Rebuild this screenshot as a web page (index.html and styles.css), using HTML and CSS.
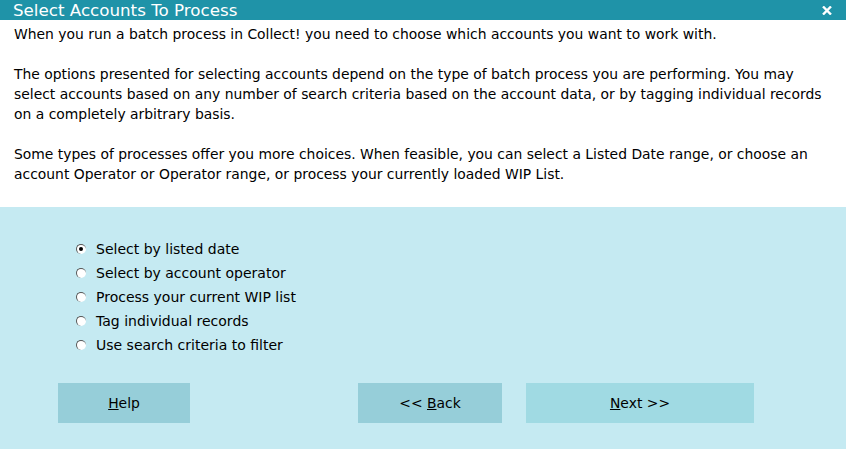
FILE: index.html
```html
<!DOCTYPE html>
<html>
<head>
<meta charset="utf-8">
<link rel="stylesheet" href="styles.css">
</head>
<body>
<div class="dialog">
  <div class="titlebar">
    <span class="title">Select Accounts To Process</span>
    <svg class="close" width="10" height="9" viewBox="0 0 10 9"><path d="M1 0.5 L9 8.5 M9 0.5 L1 8.5" stroke="#fff" stroke-width="2.4" fill="none"/></svg>
  </div>
  <div class="info">
    <p>When you run a batch process in Collect! you need to choose which accounts you want to work with.</p>
    <p>The options presented for selecting accounts depend on the type of batch process you are performing. You may select accounts based on any number of search criteria based on the account data, or by tagging individual records on a completely arbitrary basis.</p>
    <p>Some types of processes offer you more choices. When feasible, you can select a Listed Date range, or choose an account Operator or Operator range, or process your currently loaded WIP List.</p>
  </div>
  <div class="panel">
    <div class="options">
      <label class="opt"><span class="radio checked"></span><span>Select by listed date</span></label>
      <label class="opt"><span class="radio"></span><span>Select by account operator</span></label>
      <label class="opt"><span class="radio"></span><span>Process your current WIP list</span></label>
      <label class="opt"><span class="radio"></span><span>Tag individual records</span></label>
      <label class="opt"><span class="radio"></span><span>Use search criteria to filter</span></label>
    </div>
    <div class="buttons">
      <div class="btn help"><span><u>H</u>elp</span></div>
      <div class="btn back"><span>&lt;&lt; <u>B</u>ack</span></div>
      <div class="btn next"><span><u>N</u>ext &gt;&gt;</span></div>
    </div>
  </div>
</div>
</body>
</html>
```
FILE: styles.css
```css
html, body {
  margin: 0;
  padding: 0;
}
body {
  font-family: "DejaVu Sans", Verdana, sans-serif;
  font-size: 13.9px;
  color: #000;
  background: #c5eaf2;
}
.dialog {
  width: 846px;
  height: 449px;
  display: flex;
  flex-direction: column;
}
.titlebar {
  height: 20px;
  background: #1f93a8;
  color: #fff;
  display: flex;
  align-items: center;
  justify-content: space-between;
  padding: 0 13px 0 13px;
  box-sizing: border-box;
}
.title {
  font-size: 16.7px;
  line-height: 20px;
}
.close {
  display: block;
  margin-right: 1px;
}
.info {
  background: #fff;
  height: 187px;
  padding: 4px 14px 0 14px;
  box-sizing: border-box;
}
.info p {
  margin: 0 0 20px 0;
  line-height: 20px;
}
.panel {
  flex: 1;
  background: #c5eaf2;
  padding: 30px 0 0 0;
}
.options {
  display: flex;
  flex-direction: column;
  padding-left: 76px;
  font-size: 14px;
}
.opt {
  display: flex;
  align-items: center;
  height: 24px;
  line-height: 24px;
}
.radio {
  width: 10px;
  height: 10px;
  border-radius: 50%;
  background: #fff;
  box-sizing: border-box;
  border-top: 1px solid #555;
  border-left: 1px solid #555;
  margin-right: 10px;
  position: relative;
}
.radio.checked::after {
  content: "";
  position: absolute;
  left: 2px;
  top: 2px;
  width: 4px;
  height: 4px;
  border-radius: 50%;
  background: #000;
}
.buttons {
  display: flex;
  margin-top: 26px;
  padding-left: 58px;
}
.btn {
  height: 40px;
  display: flex;
  align-items: center;
  justify-content: center;
  font-size: 13.9px;
}
.help {
  width: 132px;
  background: #96ced9;
}
.back {
  width: 144px;
  margin-left: 168px;
  background: #96ced9;
}
.next {
  width: 228px;
  margin-left: 24px;
  background: #a0dae3;
}
```
